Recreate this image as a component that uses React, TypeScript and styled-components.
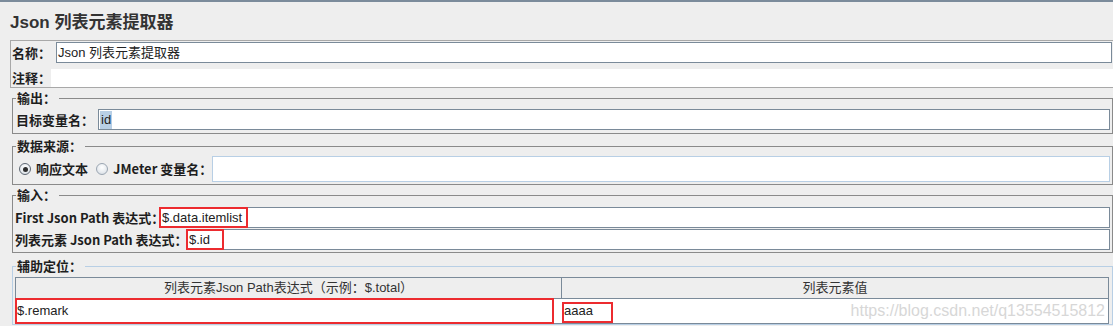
import React from "react";
import styled, { createGlobalStyle } from "styled-components";

const GlobalStyle = createGlobalStyle`
  html, body { margin: 0; padding: 0; background: #eeeeee; }
  body { font-family: "Liberation Sans", "Noto Sans CJK SC", sans-serif; }
  * { box-sizing: border-box; }
`;

const Window = styled.div`
  width: 1113px;
  height: 326px;
  overflow: hidden;
  background: #eeeeee;
  border-top: 2px solid #7b8b9b;
`;

const Title = styled.h1`
  margin: 0 0 7px 10px;
  padding-top: 11px;
  height: 31px;
  font: bold 17px/20px "Liberation Sans", "Noto Sans CJK SC", sans-serif;
  color: #333333;
  white-space: nowrap;
`;

const NamePanel = styled.div`
  margin: 0 -4px 0 10px;
  border: 1px solid #a8a8a8;
  padding: 1px 0 0 1px;
`;

const Row = styled.div<{ $mt?: number }>`
  display: flex;
  align-items: center;
  margin-top: ${(p) => p.$mt ?? 0}px;
`;

const FieldLabel = styled.span<{ $w: number }>`
  flex: none;
  width: ${(p) => p.$w}px;
  font: bold 13px/16px "Noto Sans CJK SC", sans-serif;
  color: #1e1e1e;
  white-space: nowrap;
`;

const TextBox = styled.div<{ $h: number; $light?: boolean; $mr?: number; $pl?: number }>`
  position: relative;
  flex: 1;
  min-width: 0;
  height: ${(p) => p.$h}px;
  margin-right: ${(p) => p.$mr ?? 0}px;
  padding-left: ${(p) => p.$pl ?? 2}px;
  border: 1px solid ${(p) => (p.$light ? "#b8cfe5" : "#7a8a99")};
  background: #ffffff;
  font: 13px/${(p) => p.$h - 2}px "Liberation Sans", "Noto Sans CJK SC", sans-serif;
  color: #222222;
  white-space: nowrap;
`;

const PlainArea = styled.div`
  flex: 1;
  height: 18px;
  background: #ffffff;
`;

const Selected = styled.span`
  background: #b8cfe5;
  display: inline-block;
  line-height: 18px;
  padding: 0 1px;
`;

const Marker = styled.span<{ $w: number; $h: number; $l?: number; $t?: number }>`
  position: absolute;
  left: ${(p) => p.$l ?? -1}px;
  top: ${(p) => p.$t ?? -1}px;
  width: ${(p) => p.$w}px;
  height: ${(p) => p.$h}px;
  border: 2px solid #ec2b2f;
  pointer-events: none;
`;

const Group = styled.fieldset<{ $mt: number; $blue?: boolean }>`
  margin: ${(p) => p.$mt}px 0 0 12px;
  padding: 0;
  min-width: 0;
  border: 1px solid ${(p) => (p.$blue ? "#b8cfe5" : "#8a8a8a")};
`;

const Legend = styled.legend`
  margin-left: 3px;
  padding: 0 3px 0 1px;
  font: bold 13px/14px "Noto Sans CJK SC", sans-serif;
  color: #1e1e1e;
`;

const GroupBody = styled.div<{ $pad: string }>`
  padding: ${(p) => p.$pad};
  display: flex;
  flex-direction: column;
  gap: 1px;
`;

const Radio = styled.span<{ $checked?: boolean }>`
  flex: none;
  width: 12px;
  height: 12px;
  border-radius: 50%;
  border: 1px solid ${(p) => (p.$checked ? "#5f6873" : "#9ba6b2")};
  background: radial-gradient(circle at 50% 35%, #ffffff 0%, #e8ecf0 55%, #cfd6de 100%);
  display: flex;
  align-items: center;
  justify-content: center;
  &::after {
    content: "";
    width: 5px;
    height: 5px;
    border-radius: 50%;
    background: ${(p) => (p.$checked ? "#2e2e2e" : "transparent")};
  }
`;

const RadioText = styled.span<{ $ml: number; $w?: number }>`
  flex: none;
  margin-left: ${(p) => p.$ml}px;
  width: ${(p) => (p.$w ? `${p.$w}px` : "auto")};
  font: bold 13px/16px "Noto Sans CJK SC", sans-serif;
  color: #1e1e1e;
  white-space: nowrap;
`;

const RadioGap = styled.span<{ $w: number }>`
  flex: none;
  width: ${(p) => p.$w}px;
`;

const Table = styled.div`
  border: 1px solid #7a8a99;
  border-bottom: none;
`;

const HeaderRow = styled.div`
  display: grid;
  grid-template-columns: 546px 1fr;
  height: 21px;
  border-bottom: 1px solid #7a8a99;
  background: #eeeeee;
`;

const HeaderCell = styled.div<{ $divider?: boolean }>`
  text-align: center;
  font: 13px/20px "Liberation Sans", "Noto Sans CJK SC", sans-serif;
  color: #333333;
  border-right: ${(p) => (p.$divider ? "1px solid #7a8a99" : "none")};
  white-space: nowrap;
`;

const BodyRow = styled.div`
  position: relative;
  display: grid;
  grid-template-columns: 546px 1fr;
  height: 25px;
  border-bottom: 1px solid #7a8a99;
  background: #ffffff;
`;

const BodyCell = styled.div<{ $pl: number }>`
  position: relative;
  padding-left: ${(p) => p.$pl}px;
  font: 13px/24px "Liberation Sans", "Noto Sans CJK SC", sans-serif;
  color: #222222;
  white-space: nowrap;
`;

const Watermark = styled.span`
  position: absolute;
  right: 3px;
  top: 0;
  font: 16px/23px "Liberation Sans", sans-serif;
  color: #d7d7d7;
  pointer-events: none;
`;

export default function App() {
  return (
    <>
      <GlobalStyle />
      <Window>
        <Title>Json 列表元素提取器</Title>

        <NamePanel>
          <Row>
            <FieldLabel $w={44}>名称：</FieldLabel>
            <TextBox $h={21} $mr={4} $pl={1}>
              Json 列表元素提取器
            </TextBox>
          </Row>
          <Row $mt={6}>
            <FieldLabel $w={39}>注释：</FieldLabel>
            <PlainArea />
          </Row>
        </NamePanel>

        <Group $mt={3}>
          <Legend>输出：</Legend>
          <GroupBody $pad="4px 2px 3px 3px">
            <Row>
              <FieldLabel $w={82}>目标变量名：</FieldLabel>
              <TextBox $h={21} $pl={1}>
                <Selected>id</Selected>
              </TextBox>
            </Row>
          </GroupBody>
        </Group>

        <Group $mt={5}>
          <Legend>数据来源：</Legend>
          <GroupBody $pad="3px 2px 2px 3px">
            <Row>
              <RadioGap $w={3} />
              <Radio $checked />
              <RadioText $ml={5}>响应文本</RadioText>
              <RadioGap $w={8} />
              <Radio />
              <RadioText $ml={5} $w={99}>
                JMeter 变量名：
              </RadioText>
              <TextBox $h={26} $light />
            </Row>
          </GroupBody>
        </Group>

        <Group $mt={3}>
          <Legend>输入：</Legend>
          <GroupBody $pad="5px 2px 2px 2px">
            <Row>
              <FieldLabel $w={144}>First Json Path 表达式：</FieldLabel>
              <TextBox $h={21}>
                $.data.itemlist
                <Marker $w={89} $h={21} />
              </TextBox>
            </Row>
            <Row>
              <FieldLabel $w={171}>列表元素 Json Path 表达式：</FieldLabel>
              <TextBox $h={21}>
                $.id
                <Marker $w={38} $h={21} />
              </TextBox>
            </Row>
          </GroupBody>
        </Group>

        <Group $mt={6} $blue>
          <Legend>辅助定位：</Legend>
          <GroupBody $pad="4px 3px 0 2px">
            <Table>
              <HeaderRow>
                <HeaderCell $divider>列表元素Json Path表达式（示例：$.total）</HeaderCell>
                <HeaderCell>列表元素值</HeaderCell>
              </HeaderRow>
              <BodyRow>
                <BodyCell $pl={1}>
                  $.remark
                  <Marker $w={539} $h={26} $l={-1} $t={-1} />
                </BodyCell>
                <BodyCell $pl={2}>
                  aaaa
                  <Marker $w={51} $h={21} $l={0} $t={3} />
                </BodyCell>
                <Watermark>https://blog.csdn.net/q13554515812</Watermark>
              </BodyRow>
            </Table>
          </GroupBody>
        </Group>
      </Window>
    </>
  );
}
